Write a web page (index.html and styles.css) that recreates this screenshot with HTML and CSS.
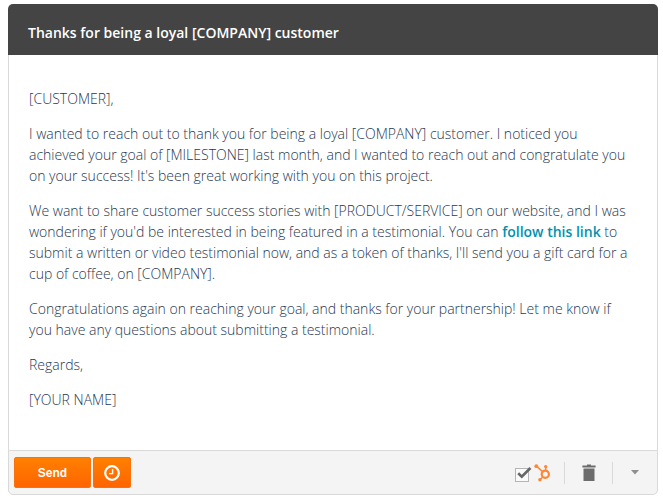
FILE: index.html
```html
<!DOCTYPE html>
<html lang="en">
<head>
<meta charset="utf-8">
<title>Thanks for being a loyal [COMPANY] customer</title>
<link rel="stylesheet" href="styles.css">
</head>
<body>
<main class="email">
  <header class="email-header">
    <h1 class="subject">Thanks for being a loyal [COMPANY] customer</h1>
  </header>
  <div class="message">
    <p>[CUSTOMER],</p>
    <p>I wanted to reach out to thank you for being a loyal [COMPANY] customer. I noticed you achieved your goal of [MILESTONE] last month, and I wanted to reach out and congratulate you on your success! It's been great working with you on this project.</p>
    <p>We want to share customer success stories with [PRODUCT/SERVICE] on our website, and I was wondering if you'd be interested in being featured in a testimonial. You can <a href="#">follow this link</a> to submit a written or video testimonial now, and as a token of thanks, I'll send you a gift card for a cup of coffee, on [COMPANY].</p>
    <p>Congratulations again on reaching your goal, and thanks for your partnership! Let me know if you have any questions about submitting a testimonial.</p>
    <p>Regards,</p>
    <p>[YOUR NAME]</p>
  </div>
  <footer class="toolbar">
    <div class="send-group">
      <button class="btn btn-send" type="button">Send</button>
      <button class="btn btn-schedule" type="button" aria-label="Schedule">
        <svg width="18" height="18" viewBox="0 0 18 18" fill="none" stroke="#fff"><circle cx="9" cy="9" r="6.8" stroke-width="2.2"/><path d="M9.6 5v4.6H6" stroke-width="1.4"/></svg>
      </button>
    </div>
    <div class="tools">
      <label class="track">
        <input class="track-box" type="checkbox" checked aria-label="Track email">
        <svg class="track-tick" width="18" height="16" viewBox="0 0 18 16" fill="none" stroke="#666" stroke-width="2.6"><path d="M3.2 7.2l3.6 3.5L15.4 2"/></svg>
        <svg class="sprocket" width="18" height="18" viewBox="0 0 18 18" fill="none" stroke="#ff8533"><circle cx="11.3" cy="10.3" r="3.6" stroke-width="2.2"/><path d="M3 2.6l5.6 5M11.7 2.5v4.2M8.8 13L6 15.7" stroke-width="1.5"/><g fill="#ff8533" stroke="none"><circle cx="2.3" cy="2.2" r="1.9"/><circle cx="11.7" cy="2.6" r="1.7"/><circle cx="5.9" cy="15.8" r="1.7"/></g></svg>
      </label>
      <button class="tool tool-trash" type="button" aria-label="Delete">
        <svg width="14" height="18" viewBox="0 0 14 18" fill="#6c6c6c"><path d="M5 .4h4v1h4.6v2H.4v-2H5zM1.5 4.6h11V17h-11z"/></svg>
      </button>
      <button class="tool tool-more" type="button" aria-label="More options">
        <svg width="8" height="5" viewBox="0 0 8 5" fill="#8f8f8f"><path d="M0 0h8L4 4.6z"/></svg>
      </button>
    </div>
  </footer>
</main>
</body>
</html>
```
FILE: styles.css
```css
* {
  box-sizing: border-box;
}

body {
  margin: 4px 5px 4px 8px;
  background: #fff;
  font-family: "Open Sans", "Liberation Sans", sans-serif;
}

.email {
  border-radius: 5px;
}

.email-header {
  padding: 18px 20px 12px;
  background: #444;
  border-radius: 5px 5px 0 0;
}

.subject {
  margin: 0;
  color: #fff;
  font-size: 14px;
  line-height: 21px;
  font-weight: 600;
}

.message {
  padding: 33px 24px 40px 20px;
  border: 1px solid #d9d9d9;
  border-width: 0 1px;
  color: #1f3852;
  font-size: 14px;
  font-weight: 300;
  line-height: 21px;
}

.message p {
  margin: 0 0 14px;
}

.message p:last-child {
  margin-bottom: 0;
}

.message a {
  color: #0091ae;
  font-weight: 600;
  text-decoration: none;
}

.toolbar {
  display: flex;
  justify-content: space-between;
  align-items: center;
  padding: 6px 1px 6px 5px;
  border: 1px solid #d9d9d9;
  border-radius: 0 0 5px 5px;
  background: #f4f4f4;
}

.send-group {
  display: flex;
  gap: 2px;
}

.btn {
  display: flex;
  justify-content: center;
  align-items: center;
  height: 31px;
  padding: 0;
  border: 1px solid #f87310;
  border-radius: 2px;
  background: linear-gradient(#ff8000, #ff6400);
  color: #fff;
  font: 700 12px "Liberation Sans", sans-serif;
}

.btn-send {
  width: 77px;
}

.btn-schedule {
  width: 38px;
}

.tools {
  display: flex;
  align-items: center;
}

.track {
  position: relative;
  display: flex;
  align-items: center;
  gap: 5px;
  padding-right: 12px;
}

.track-box {
  appearance: none;
  width: 14px;
  height: 14px;
  margin: 4px 0 0;
  border: 1px solid #b5b5b5;
  background: #fafafa;
}

.track-tick {
  position: absolute;
  left: 0;
  top: 2px;
}

.tool {
  display: flex;
  justify-content: center;
  align-items: center;
  height: 22px;
  padding: 0;
  border: 0;
  border-left: 1px solid #d9d9d9;
  background: none;
}

.tool-trash {
  width: 48px;
}

.tool-more {
  width: 44px;
}
```
